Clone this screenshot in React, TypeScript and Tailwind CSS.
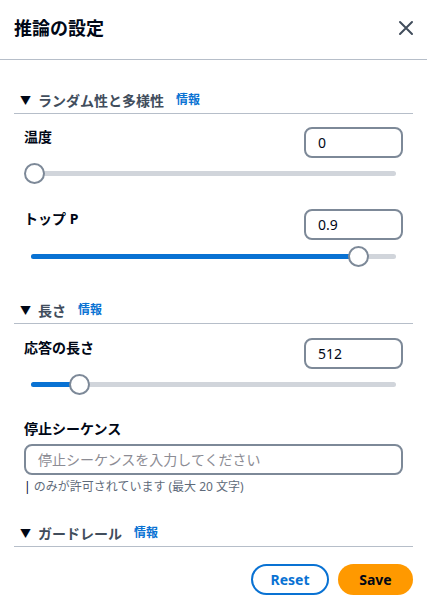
import React from "react";

const font = { fontFamily: '"Noto Sans", "Noto Sans CJK JP", sans-serif' };

function SectionHeading({ title, mt }: { title: string; mt: string }) {
  return (
    <div className={`${mt} border-b border-[#b6bec9] pb-[3px]`}>
      <div className="flex h-[20px] items-center pl-[6px]">
        <span className="text-[11px] leading-none text-[#000716]">▼</span>
        <span className="ml-[7px] text-[14px] font-bold text-[#414d5c]">{title}</span>
        <span className="ml-[12px] text-[12px] font-bold text-[#0972d3]">情報</span>
      </div>
    </div>
  );
}

function Slider({ frac, mt }: { frac: number; mt: string }) {
  const center = 10 + frac * 360;
  return (
    <div className={`${mt} relative flex h-[22px] items-center`}>
      <div className="mx-[7px] h-[5px] flex-1 rounded-full bg-[#d1d5db]">
        <div className="h-[5px] rounded-full bg-[#0972d3]" style={{ width: frac > 0 ? center - 7 : 0 }} />
      </div>
      <div
        className="absolute top-[0.5px] h-[21px] w-[21px] rounded-full border-2 border-[#7d8998] bg-white"
        style={{ left: center - 10.5 }}
      />
    </div>
  );
}

function FieldRow({ label, value, mt }: { label: string; value: string; mt: string }) {
  return (
    <div className={`${mt} flex items-start justify-between`}>
      <span className="text-[14px] font-bold leading-[20px] text-[#000716]">{label}</span>
      <div className="flex h-[31px] w-[99px] items-center rounded-[8px] border-2 border-[#7d8998] px-[12px] text-[14px] text-[#000716]">
        {value}
      </div>
    </div>
  );
}

export default function App() {
  return (
    <div className="h-[600px] w-[427px] bg-white" style={font}>
      <header className="flex h-[60px] items-center justify-between border-b border-[#b6bec9] px-[14px] pb-[3px]">
        <h1 className="text-[18px] font-bold text-[#000716]">推論の設定</h1>
        <svg width="16" height="16" viewBox="0 0 16 16" className="mr-[-1px]">
          <path d="M2 2 L14 14 M14 2 L2 14" stroke="#414d5c" strokeWidth="2" strokeLinecap="round" />
        </svg>
      </header>

      <div className="px-[14px]">
        <SectionHeading title="ランダム性と多様性" mt="mt-[30px]" />
        <div className="px-[10px]">
          <FieldRow label="温度" value="0" mt="mt-[13px]" />
          <Slider frac={0} mt="mt-[4px]" />
          <FieldRow label="トップ P" value="0.9" mt="mt-[25px]" />
          <Slider frac={0.9} mt="mt-[5px]" />
        </div>

        <SectionHeading title="長さ" mt="mt-[33px]" />
        <div className="px-[10px]">
          <FieldRow label="応答の長さ" value="512" mt="mt-[14px]" />
          <Slider frac={512 / 4096} mt="mt-[4px]" />
          <div className="mt-[24px] text-[14px] font-bold leading-[20px] text-[#000716]">停止シーケンス</div>
          <div className="mt-[5px] flex h-[31px] items-center rounded-[8px] border-2 border-[#7d8998] px-[12px] text-[14px] text-[#8c8c94]">
            停止シーケンスを入力してください
          </div>
          <div className="mt-[4px] text-[12px] leading-[16px] text-[#5f6b7a]">
            <span className="text-[#000716]">|</span> のみが許可されています (最大 20 文字)
          </div>
        </div>

        <SectionHeading title="ガードレール" mt="mt-[28px]" />

        <div className="mt-[17px] flex justify-end gap-[9px]">
          <button className="h-[31px] w-[78px] rounded-full border-2 border-[#0972d3] text-[14px] font-bold text-[#0972d3]">
            Reset
          </button>
          <button className="h-[31px] w-[75px] rounded-full bg-[#ff9900] text-[14px] font-bold text-[#000716]">
            Save
          </button>
        </div>
      </div>
    </div>
  );
}
